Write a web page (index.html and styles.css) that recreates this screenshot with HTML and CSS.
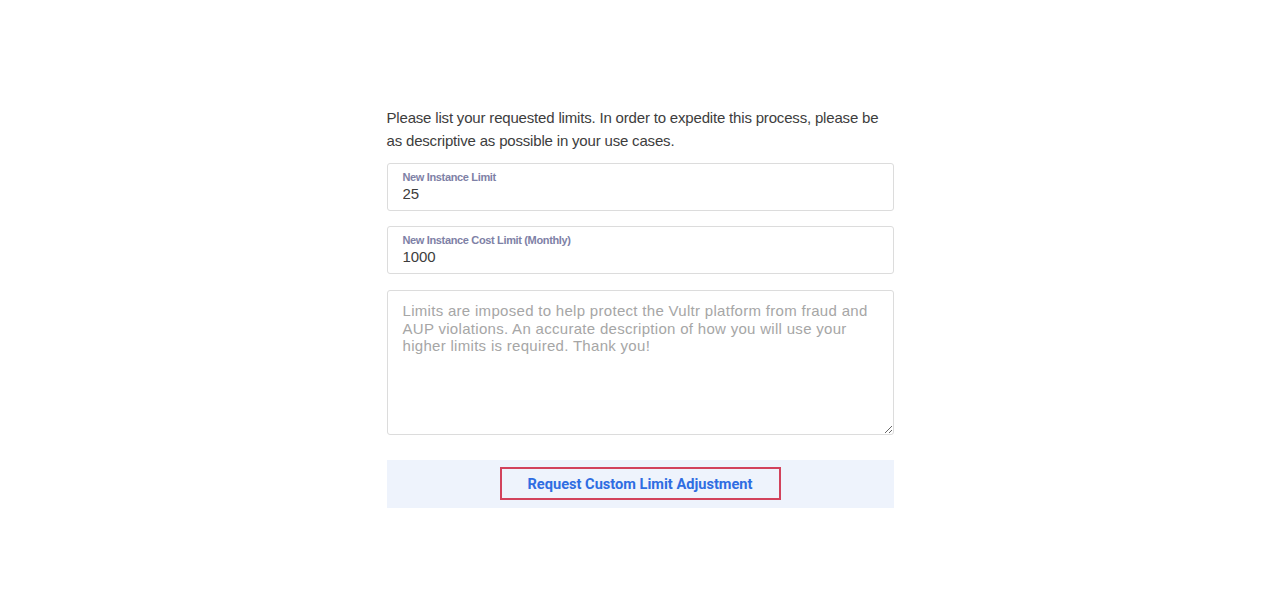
FILE: index.html
```html
<!DOCTYPE html>
<html lang="en">
<head>
    <meta charset="UTF-8">
    <meta name="viewport" content="width=device-width, initial-scale=1.0">
    <title>Request Custom Limit Adjustment</title>
    <link rel="stylesheet" href="styles.css">
</head>
<body>
    <div class="limits-form">
        <p class="intro">Please list your requested limits. In order to expedite this process, please be as descriptive as possible in your use cases.</p>

        <label class="field">
            <span class="field-label">New Instance Limit</span>
            <input type="text" class="field-input" value="25">
        </label>

        <label class="field">
            <span class="field-label">New Instance Cost Limit (Monthly)</span>
            <input type="text" class="field-input" value="1000">
        </label>

        <textarea class="use-case" placeholder="Limits are imposed to help protect the Vultr platform from fraud and AUP violations. An accurate description of how you will use your higher limits is required. Thank you!"></textarea>

        <!-- Кнопка отправки -->
        <div class="submit-bar">
            <button class="submit-button">Request Custom Limit Adjustment</button>
        </div>
    </div>
</body>
</html>
```

FILE: styles.css
```css
/* Основные стили */
body, html {
    margin: 0;
    padding: 0;
    background-color: #fff;
    font-family: 'Liberation Sans', Arial, sans-serif;
    color: #3d3d3d;
}

.limits-form {
    width: 507px;
    margin: 0 auto;
    padding-top: 106px;
}

.intro {
    margin: 0 0 11px;
    font-size: 15px;
    line-height: 23px;
    letter-spacing: -0.18px;
}

.field {
    display: flex;
    flex-direction: column;
    padding: 6px 15px;
    margin-bottom: 15px;
    border: 1px solid #dcdcdc;
    border-radius: 3px;
}

.field-label {
    font-size: 11px;
    line-height: 14px;
    font-weight: bold;
    letter-spacing: -0.35px;
    color: #7e81a6;
}

.field-input {
    border: none;
    outline: none;
    padding: 0;
    margin: 0;
    font-family: inherit;
    font-size: 15px;
    line-height: 20px;
    height: 20px;
    letter-spacing: -0.1px;
    color: #3d3d3d;
    background: transparent;
}

.use-case {
    display: block;
    box-sizing: border-box;
    width: 100%;
    height: 145px;
    margin: 16px 0 0;
    padding: 11px 15px;
    border: 1px solid #dcdcdc;
    border-radius: 3px;
    font-family: inherit;
    font-size: 15px;
    line-height: 17.5px;
    letter-spacing: 0.3px;
    color: #3d3d3d;
}

.use-case::placeholder {
    color: #a6a6a6;
}

.submit-bar {
    display: flex;
    justify-content: center;
    margin-top: 25px;
    padding: 7px 0 8px;
    background-color: #eef3fc;
}

.submit-button {
    width: 281px;
    height: 33px;
    padding: 0;
    background: transparent;
    border: 2px solid #d2425c;
    font-family: 'Roboto', sans-serif;
    font-size: 14.6px;
    font-weight: bold;
    color: #2f6de2;
    cursor: pointer;
}
```
